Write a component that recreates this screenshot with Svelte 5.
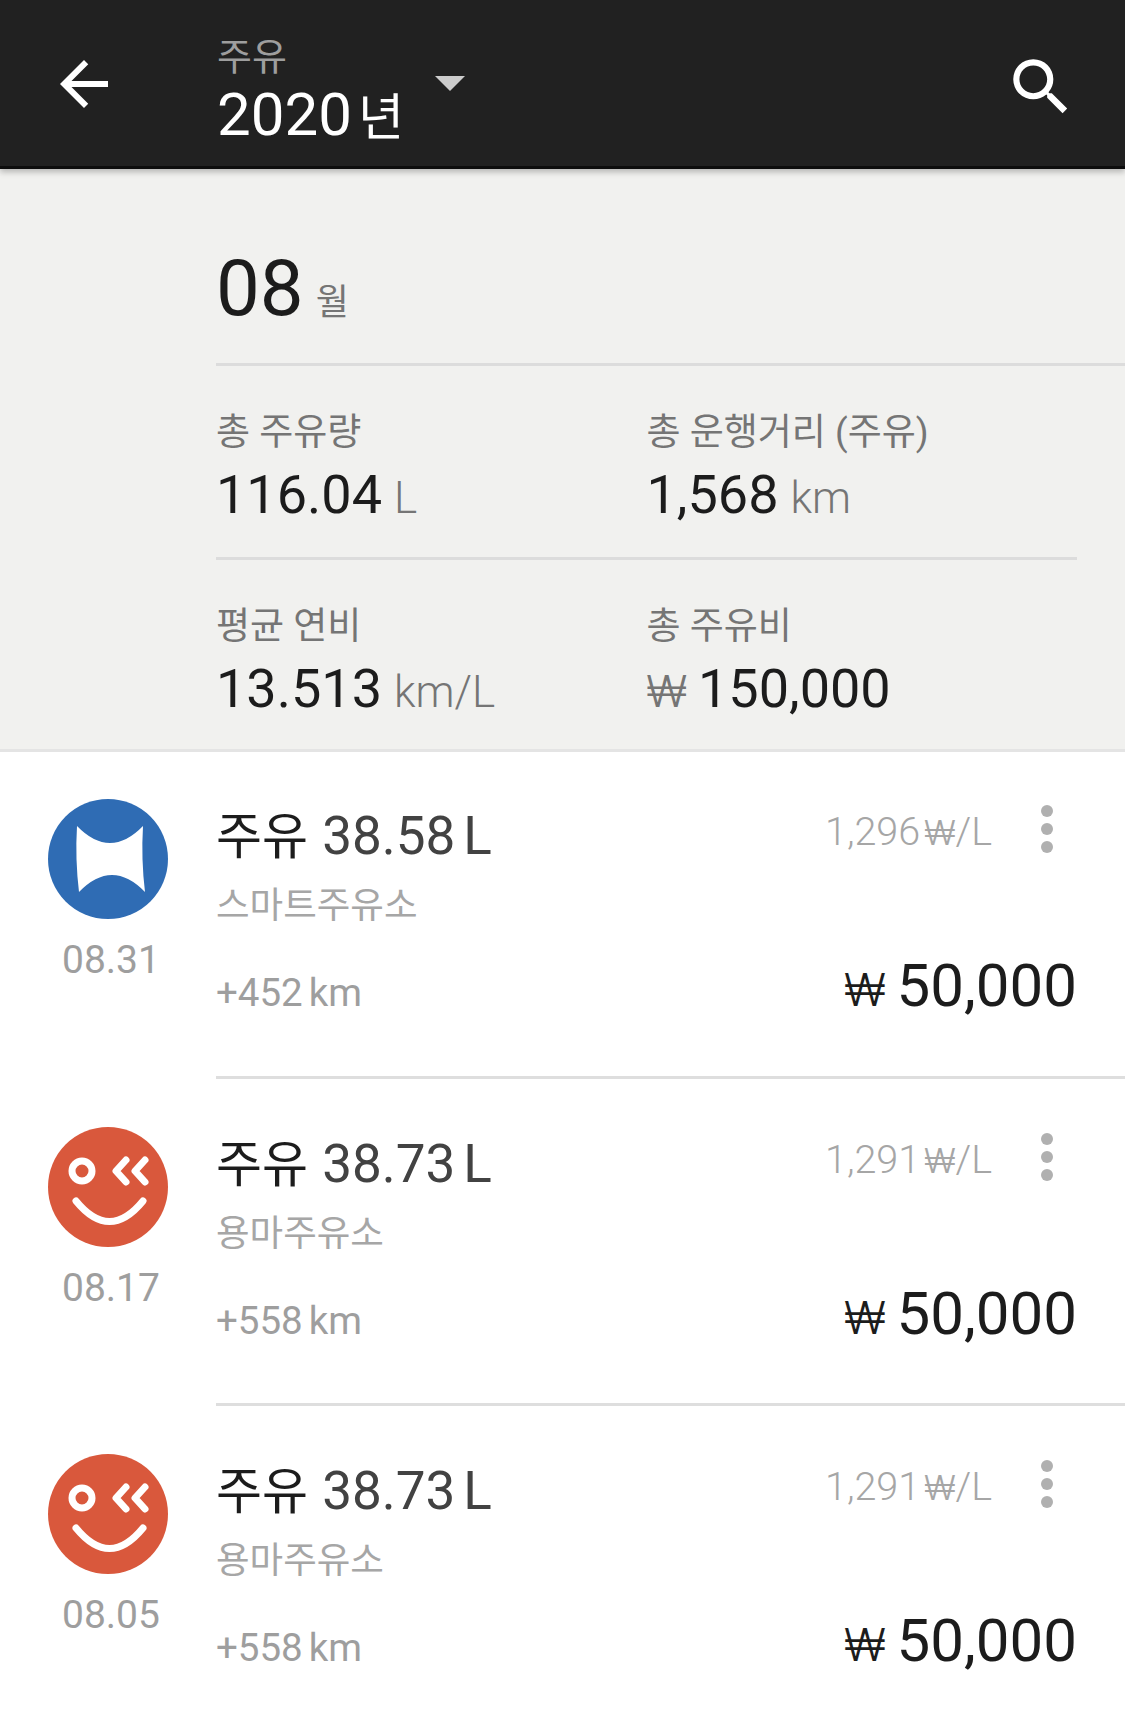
<script>
  const stats = [
    [
      { label: '총 주유량', value: '116.04', unit: 'L' },
      { label: '총 운행거리 (주유)', value: '1,568', unit: 'km' }
    ],
    [
      { label: '평균 연비', value: '13.513', unit: 'km/L' },
      { label: '총 주유비', prefix: '₩', value: '150,000' }
    ]
  ];

  const rows = [
    { logo: 'blue', date: '08.31', liters: '38.58', station: '스마트주유소', km: '+452', rate: '1,296' },
    { logo: 'red', date: '08.17', liters: '38.73', station: '용마주유소', km: '+558', rate: '1,291' },
    { logo: 'red', date: '08.05', liters: '38.73', station: '용마주유소', km: '+558', rate: '1,291' }
  ];
</script>

<div class="page">
  <header class="bar">
    <svg class="back" viewBox="0 0 24 24"><path d="M20 11H7.83l5.59-5.59L12 4l-8 8 8 8 1.41-1.41L7.83 13H20v-2z" /></svg>
    <div class="heading">
      <div class="kind">주유</div>
      <div class="year">2020<span>년</span></div>
    </div>
    <svg class="caret" viewBox="0 0 30 15"><path d="M0 0h30L15 15z" /></svg>
    <svg class="search" viewBox="0 0 24 24"><path d="M15.5 14h-.79l-.28-.27A6.47 6.47 0 0 0 16 9.5 6.5 6.5 0 1 0 9.5 16c1.61 0 3.09-.59 4.23-1.57l.27.28v.79l5 4.99L20.49 19l-4.99-5zm-6 0C7.01 14 5 11.99 5 9.5S7.01 5 9.5 5 14 7.01 14 9.5 11.99 14 9.5 14z" /></svg>
  </header>

  <section class="summary">
    <div class="month">08<span>월</span></div>
    {#each stats as line, i}
      <div class="stats" class:last={i === 1}>
        {#each line as s}
          <div class="stat">
            <div class="label">{s.label}</div>
            <div class="value">
              {#if s.prefix}<span class="prefix">{s.prefix}</span>{/if}{s.value}{#if s.unit}<span class="unit">{s.unit}</span>{/if}
            </div>
          </div>
        {/each}
      </div>
    {/each}
  </section>

  <ul class="list">
    {#each rows as r}
      <li class="row">
        <div class="side">
          {#if r.logo === 'blue'}
            <svg class="logo" viewBox="0 0 120 120">
              <circle cx="60" cy="60" r="60" fill="#2f6cb4" />
              <path d="M29 27Q62 61 95 27Q93 60 97 93Q64 59 31 93Q27 60 29 27Z" fill="#fff" />
            </svg>
          {:else}
            <svg class="logo" viewBox="0 0 120 120">
              <circle cx="60" cy="60" r="60" fill="#d9583c" />
              <g fill="none" stroke="#fff" stroke-linecap="round" stroke-linejoin="round" stroke-width="7">
                <circle cx="34" cy="44" r="10" />
                <path d="M78 33L68 44L78 55M97 33L87 44L97 55" />
                <path d="M28 74Q61.5 115 95 74" />
              </g>
            </svg>
          {/if}
          <div class="date">{r.date}</div>
        </div>
        <div class="main">
          <div class="top">
            <div class="title"><span class="kr">주유</span> {r.liters}<span class="l">L</span></div>
            <div class="rate">{r.rate}<span>₩</span>/L</div>
            <div class="dots"><i></i><i></i><i></i></div>
          </div>
          <div class="station">{r.station}</div>
          <div class="bottom">
            <div class="km">{r.km}<span>km</span></div>
            <div class="price"><span>₩</span>50,000</div>
          </div>
        </div>
      </li>
    {/each}
  </ul>
</div>

<style>
  :global(body) {
    margin: 0;
    background: #fff;
  }
  .page {
    width: 1125px;
    height: 1727px;
    overflow: hidden;
    font-family: Roboto, "Noto Sans CJK KR", sans-serif;
    color: #1c1c1c;
  }
  .bar {
    height: 166px;
    background: #212121;
    border-bottom: 3px solid #0d0d0d;
    box-shadow: 0 3px 6px rgba(0, 0, 0, 0.25);
    display: flex;
    position: relative;
    z-index: 1;
  }
  .back {
    width: 72px;
    height: 72px;
    margin: 48px 0 0 48px;
    fill: #fff;
  }
  .heading {
    margin: 33px 0 0 97px;
    width: 218px;
  }
  .kind {
    font-size: 38px;
    line-height: 48px;
    color: #9e9e9e;
  }
  .year {
    font-size: 60px;
    line-height: 68px;
    color: #fff;
  }
  .year span {
    font-size: 50px;
    margin-left: 6px;
  }
  .caret {
    width: 30px;
    height: 15px;
    margin-top: 76px;
    fill: #ccc;
  }
  .search {
    width: 74px;
    height: 74px;
    margin: 50px 0 0 539px;
    fill: #fff;
  }
  .summary {
    background: #f1f1ef;
    height: 580px;
    padding-left: 216px;
    border-bottom: 3px solid #e4e4e4;
  }
  .month {
    height: 197px;
    box-sizing: border-box;
    padding-top: 73px;
    font-size: 78px;
    line-height: 94px;
    border-bottom: 3px solid #dcdcdc;
  }
  .month span {
    font-size: 36px;
    color: #757575;
    margin-left: 12px;
  }
  .stats {
    display: flex;
    height: 194px;
    box-sizing: border-box;
    padding-top: 45px;
    margin-right: 48px;
    border-bottom: 3px solid #dcdcdc;
  }
  .stats.last {
    border-bottom: 0;
  }
  .stat {
    width: 431px;
  }
  .label {
    font-size: 37px;
    line-height: 44px;
    color: #757575;
  }
  .value {
    font-size: 54px;
    line-height: 68px;
    margin-top: 6px;
  }
  .unit {
    font-size: 44px;
    font-weight: 300;
    color: #757575;
    margin-left: 12px;
  }
  .prefix {
    font-family: Inter, sans-serif;
    font-size: 44px;
    font-weight: 300;
    color: #757575;
    margin-right: 11px;
  }
  .list {
    margin: 0;
    padding: 0;
    list-style: none;
  }
  .row {
    display: flex;
    height: 327.5px;
  }
  .side {
    width: 216px;
    flex: none;
    padding: 47px 0 0 48px;
    box-sizing: border-box;
  }
  .logo {
    display: block;
    width: 120px;
    height: 120px;
  }
  .date {
    font-size: 39px;
    line-height: 48px;
    color: #9e9e9e;
    margin: 17px 0 0 14px;
  }
  .main {
    flex: 1;
    box-sizing: border-box;
    height: 326.5px;
    border-bottom: 3px solid #dedede;
    padding: 52px 48px 0 0;
  }
  .top {
    display: flex;
    align-items: flex-start;
    height: 64px;
  }
  .title {
    font-size: 53px;
    line-height: 64px;
    color: #424242;
    flex: 1;
    word-spacing: 1px;
  }
  .kr {
    color: #1c1c1c;
    font-size: 50px;
  }
  .l {
    margin-left: 8px;
  }
  .rate {
    font-size: 39.5px;
    line-height: 48px;
    font-weight: 300;
    color: #a6a6a6;
    margin-top: 4px;
  }
  .rate span {
    font-family: Inter, sans-serif;
    font-size: 34px;
    margin-left: 4px;
  }
  .dots {
    width: 12px;
    margin: 1px 24px 0 49px;
    display: flex;
    flex-direction: column;
    gap: 6px;
  }
  .dots i {
    width: 12px;
    height: 12px;
    border-radius: 50%;
    background: #b0b0b0;
  }
  .station {
    font-size: 36.5px;
    line-height: 46px;
    color: #a6a6a6;
    margin-top: 15px;
  }
  .bottom {
    display: flex;
    justify-content: space-between;
    align-items: baseline;
    margin-top: 22px;
  }
  .km {
    font-size: 38.5px;
    color: #9e9e9e;
  }
  .km span {
    margin-left: 6px;
  }
  .price {
    font-size: 60px;
    line-height: 70px;
    color: #1c1c1c;
  }
  .price span {
    font-family: Inter, sans-serif;
    font-size: 45px;
    font-weight: 300;
    margin-right: 11px;
  }
</style>
